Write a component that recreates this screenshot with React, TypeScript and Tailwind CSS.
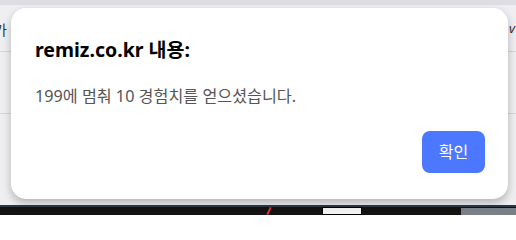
import React from "react";

export default function App() {
  return (
    <div
      className="relative w-[516px] h-[215px] overflow-hidden bg-[#ececee]"
      style={{ fontFamily: '"Noto Sans", "Noto Sans CJK KR", sans-serif' }}
    >
      {/* background page */}
      <div className="flex flex-col h-full">
        <div className="h-[5px] bg-[#dcdee3]" />
        <div className="flex-1 flex flex-col bg-[#efeff1]">
          <div className="h-[47px] flex items-start justify-between pt-[14px] text-[14px] text-[#333] border-b border-[#d6d6d8]">
            <span className="-ml-[6px]">가</span>
            <span className="mr-[1px] italic text-[13px]">v</span>
          </div>
          <div className="h-[62px] border-b border-[#d6d6d8]" />
          <div className="flex-1" />
        </div>
        <div className="h-[2px] bg-[#2b3742]" />
        <div className="h-[8px] bg-[#131313] flex items-start">
          <div className="w-[268px]" />
          <div className="w-[2px] h-[8px] bg-[#d33] rotate-[25deg]" />
          <div className="w-[52px]" />
          <div className="w-[40px] h-[8px] bg-[#f2f2f2] border border-black" />
          <div className="w-[99px]" />
          <div className="flex-1 h-[7px] mt-[1px] bg-[#7a808a]" />
        </div>
      </div>

      {/* dialog */}
      <div className="absolute left-[11px] top-[8px] w-[497px] h-[191px] bg-white rounded-[15px] shadow-[0_4px_8px_rgba(0,0,0,0.25)] flex flex-col">
        <div className="pl-[24px] pt-[29px] text-[19.5px] font-bold text-black leading-[26px]">
          remiz.co.kr 내용:
        </div>
        <div className="pl-[24px] pt-[22px] text-[16.2px] text-[#555] leading-[22px]">
          199에 멈춰 10 경험치를 얻으셨습니다.
        </div>
        <div className="flex justify-end pr-[23px] pt-[24px]">
          <button className="w-[63px] h-[42px] rounded-[8px] bg-[#4c77ff] text-white text-[16px]">
            확인
          </button>
        </div>
      </div>
    </div>
  );
}
